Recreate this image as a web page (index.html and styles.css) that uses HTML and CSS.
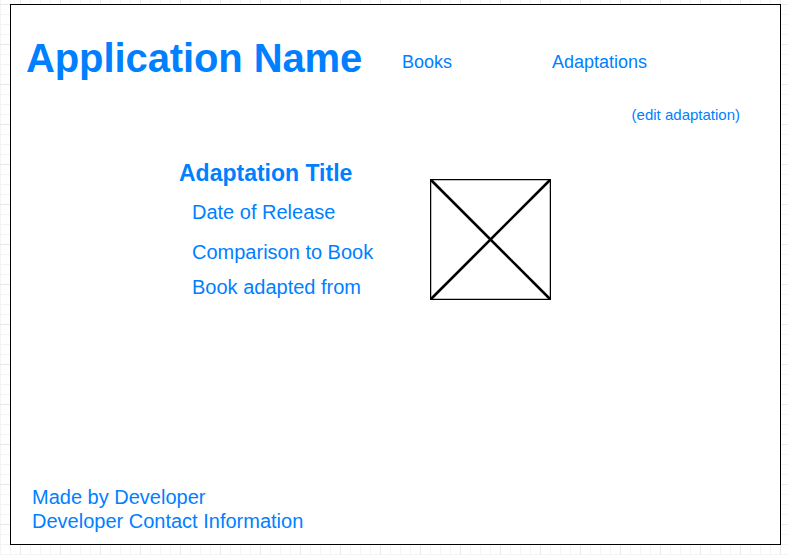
FILE: index.html
```html
<!DOCTYPE html>
<html lang="en">
<head>
<meta charset="utf-8">
<title>Adaptation</title>
<link rel="stylesheet" href="styles.css">
</head>
<body>
<div class="frame">
  <header class="header">
    <h1 class="app-name">Application Name</h1>
    <a class="nav-link" href="#">Books</a>
    <a class="nav-link" href="#">Adaptations</a>
  </header>
  <div class="edit-row"><a class="edit-link" href="#">(edit adaptation)</a></div>
  <main class="main">
    <section class="details">
      <h2 class="adapt-title">Adaptation Title</h2>
      <p class="detail detail-date">Date of Release</p>
      <p class="detail detail-compare">Comparison to Book</p>
      <p class="detail detail-book">Book adapted from</p>
    </section>
    <div class="placeholder">
      <svg width="121" height="121" viewBox="0 0 121 121" aria-hidden="true">
        <rect x="0.5" y="0.5" width="120" height="120" fill="#fff" stroke="#000" stroke-width="1.5"/>
        <line x1="1" y1="1" x2="120" y2="120" stroke="#000" stroke-width="2.6"/>
        <line x1="120" y1="1" x2="1" y2="120" stroke="#000" stroke-width="2.6"/>
      </svg>
    </div>
  </main>
  <footer class="footer">
    <p class="footer-line">Made by Developer</p>
    <p class="footer-line">Developer Contact Information</p>
  </footer>
</div>
</body>
</html>
```
FILE: styles.css
```css
html, body {
  margin: 0;
  padding: 0;
}
body {
  width: 788px;
  height: 555px;
  overflow: hidden;
  font-family: "Liberation Sans", Arial, Helvetica, sans-serif;
  color: #007fff;
  background-color: #fff;
  background-image:
    linear-gradient(to right, #e9e9e9 1px, transparent 1px),
    linear-gradient(to bottom, #e9e9e9 1px, transparent 1px),
    linear-gradient(to right, #f4f4f4 1px, transparent 1px),
    linear-gradient(to bottom, #f4f4f4 1px, transparent 1px);
  background-size: 40px 40px, 40px 40px, 10px 10px, 10px 10px;
  background-position: 20px 0, 0 4px, 0 0, 0 4px;
}
.frame {
  box-sizing: border-box;
  width: 771px;
  height: 541px;
  margin: 4px 0 0 10px;
  border: 1px solid #000;
  background: #fff;
  display: flex;
  flex-direction: column;
}
.header {
  display: grid;
  grid-template-columns: 376px 150px auto;
  align-items: start;
  padding: 33px 0 0 15px;
}
.app-name {
  margin: 0;
  font-size: 40px;
  line-height: 40px;
  font-weight: bold;
  white-space: nowrap;
  letter-spacing: -0.1px;
}
.nav-link {
  margin-top: 15px;
  font-size: 18px;
  line-height: 18px;
  color: #007fff;
  text-decoration: none;
}
.edit-row {
  margin-top: 29px;
  padding-right: 40px;
  text-align: right;
  font-size: 15px;
  line-height: 15px;
}
.edit-link {
  color: #007fff;
  text-decoration: none;
}
.main {
  display: flex;
  align-items: flex-start;
  padding-left: 168px;
  margin-top: 40px;
}
.details {
  width: 251px;
}
.adapt-title {
  margin: 0;
  font-size: 23px;
  line-height: 22px;
  font-weight: bold;
}
.detail {
  margin: 0 0 0 13px;
  font-size: 20px;
  line-height: 20px;
}
.detail-date { margin-top: 18px; }
.detail-compare { margin-top: 20px; }
.detail-book { margin-top: 15px; }
.placeholder {
  margin-top: 17px;
  width: 121px;
  height: 121px;
}
.placeholder svg {
  display: block;
}
.footer {
  margin-top: auto;
  padding: 0 0 11px 21px;
}
.footer-line {
  margin: 0;
  font-size: 20px;
  line-height: 24px;
}
```
